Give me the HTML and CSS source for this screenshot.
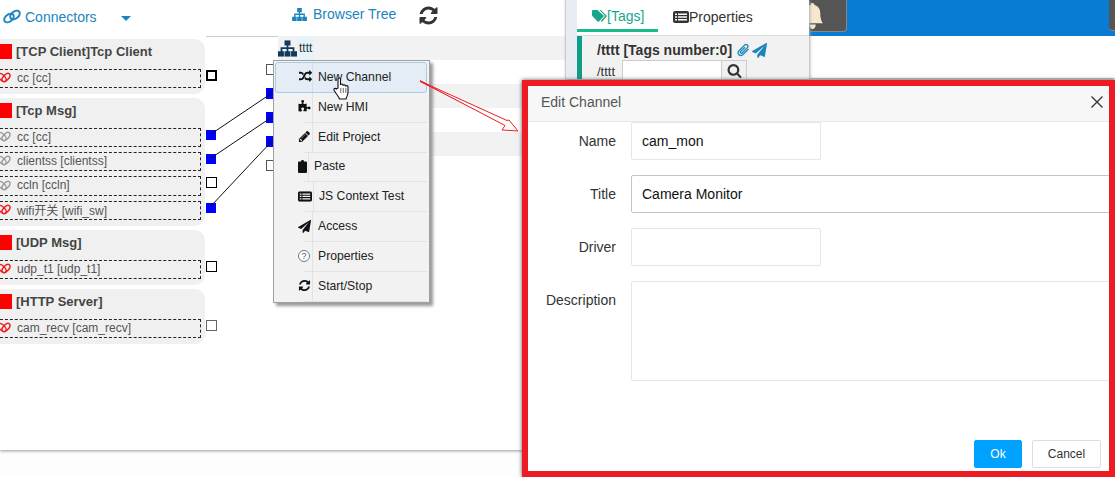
FILE: index.html
```html
<!DOCTYPE html>
<html lang="en">
<head>
<meta charset="utf-8">
<title>Edit Channel</title>
<link rel="stylesheet" href="styles.css">
</head>
<body>
<svg class="defs" width="0" height="0" aria-hidden="true">
  <symbol id="broken" viewBox="0 0 14 14">
    <g fill="none" stroke="currentColor" stroke-width="1.400">
      <ellipse cx="5" cy="6.500" rx="5" ry="2.700" transform="rotate(42 5 6.500)"/>
      <ellipse cx="9" cy="6.500" rx="5" ry="2.700" transform="rotate(-48 9 6.500)"/>
    </g>
  </symbol>
  <symbol id="sitemap" viewBox="0 0 16 14">
    <path d="M5.500 0h5v4.500H8.700V6h5.100v3.300H16V14h-5V9.300h1.300V7.500H8.700v1.800H10.500V14h-5V9.300h1.800V7.500H3.700v1.800H5V14H0V9.300h2.200V6h5.100V4.500H5.500z"/>
  </symbol>
  <symbol id="refresh" viewBox="0 0 1792 1792">
    <path d="M1639 1056q0 5-1 7-64 268-268 434.500t-478 166.500q-146 0-282.500-55t-243.500-157l-129 129q-19 19-45 19t-45-19-19-45v-448q0-26 19-45t45-19h448q26 0 45 19t19 45-19 45l-137 137q71 66 161 102t187 36q134 0 250-65t186-179q11-17 53-117 8-23 30-23h192q13 0 22.500 9.500t9.500 22.500zm25-800v448q0 26-19 45t-45 19h-448q-26 0-45-19t-19-45 19-45l138-138q-148-137-349-137-134 0-250 65t-186 179q-11 17-53 117-8 23-30 23h-199q-13 0-22.500-9.500t-9.500-22.500v-7q65-268 270-434.500t480-166.500q146 0 284 55.500t245 156.500l130-129q19-19 45-19t45 19 19 45z"/>
  </symbol>
  <symbol id="plane" viewBox="0 0 1792 1792">
    <path d="M1764 11q33 24 27 64l-256 1536q-5 29-32 45-14 8-31 8-11 0-24-5l-453-185-242 295q-18 23-49 23-13 0-22-4-19-7-30.500-23.500t-11.500-36.500v-349l864-1059-1069 925-395-162q-37-14-40-55-2-40 32-59l1664-960q15-9 32-9 20 0 36 11z"/>
  </symbol>
  <symbol id="listalt" viewBox="0 0 16 12">
    <path fill-rule="evenodd" d="M2 0h12a2 2 0 0 1 2 2v8a2 2 0 0 1-2 2H2a2 2 0 0 1-2-2V2a2 2 0 0 1 2-2zM2 2.500v1.500h2V2.500zM5 2.500v1.500h9V2.500zM2 5.200v1.500h2V5.200zM5 5.200v1.500h9V5.200zM2 8v1.500h2V8zM5 8v1.500h9V8z"/>
  </symbol>
</svg>

<div class="workspace">
  <section class="connectors">
    <header class="conn-head">
      <svg class="conn-link" viewBox="0 0 18 14"><g fill="none" stroke="currentColor" stroke-width="2"><ellipse cx="6" cy="8.500" rx="5.300" ry="3.500" transform="rotate(-38 6 8.500)"/><ellipse cx="12" cy="5.500" rx="5.300" ry="3.500" transform="rotate(-38 12 5.500)"/></g></svg>
      <span class="conn-title">Connectors</span>
      <span class="caret"></span>
    </header>

    <div class="groups">
      <article class="group">
        <h3 class="group-title"><span class="state"></span>[TCP Client]Tcp Client</h3>
        <div class="item"><svg class="chain red"><use href="#broken"/></svg>cc [cc]<span class="port"></span></div>
      </article>
      <article class="group">
        <h3 class="group-title"><span class="state"></span>[Tcp Msg]</h3>
        <div class="item"><svg class="chain grey"><use href="#broken"/></svg>cc [cc]<span class="port on"></span></div>
        <div class="item"><svg class="chain grey"><use href="#broken"/></svg>clientss [clientss]<span class="port on"></span></div>
        <div class="item tall"><svg class="chain grey"><use href="#broken"/></svg>ccln [ccln]<span class="port thin"></span></div>
        <div class="item"><svg class="chain red"><use href="#broken"/></svg>wifi开关 [wifi_sw]<span class="port on"></span></div>
      </article>
      <article class="group">
        <h3 class="group-title"><span class="state"></span>[UDP Msg]</h3>
        <div class="item"><svg class="chain red"><use href="#broken"/></svg>udp_t1 [udp_t1]<span class="port thin"></span></div>
      </article>
      <article class="group">
        <h3 class="group-title"><span class="state"></span>[HTTP Server]</h3>
        <div class="item"><svg class="chain red"><use href="#broken"/></svg>cam_recv [cam_recv]<span class="port thin soft"></span></div>
      </article>
    </div>
  </section>

  <section class="tree">
    <header class="tree-head">
      <svg class="tree-head-icon"><use href="#sitemap"/></svg>
      <span class="tree-title">Browser Tree</span>
      <svg class="tree-refresh"><use href="#refresh"/></svg>
    </header>
    <div class="tree-rows">
      <div class="tree-row band"><svg class="root-icon" viewBox="0 0 16 14"><use href="#sitemap"/></svg><span class="root-name">tttt</span></div>
      <div class="tree-row"><span class="port-in"></span></div>
      <div class="tree-row band"><span class="port-in on"></span></div>
      <div class="tree-row"><span class="port-in on"></span></div>
      <div class="tree-row band"><span class="port-in on"></span></div>
      <div class="tree-row"><span class="port-in"></span></div>
    </div>
  </section>

  <section class="tags">
    <div class="tags-strip"></div>
    <div class="tags-main">
      <nav class="tabs">
        <span class="tab active"><svg class="tab-icon" viewBox="0 0 15 12"><path d="M0 1a1 1 0 0 1 1-1h4.500L12 6l-5 5.500a1 1 0 0 1-1.400 0L.5 6.200A1.500 1.500 0 0 1 0 5z"/><path d="M7.500 0h1.300L15 6l-5 5.800-1.200-.8L13 6z"/></svg>[Tags]</span>
        <span class="tab"><svg class="tab-icon dark"><use href="#listalt"/></svg>Properties</span>
      </nav>
      <div class="tags-body">
        <div class="tags-heading">/tttt [Tags number:0]
          <svg class="clip" viewBox="0 0 14 14"><path d="M12.500 6 7 11.500c-3 2.500-6.500-.5-4-3.800l5.600-5.600c2-1.800 4.400.5 2.800 2.500L6 10c-1 .9-2.300-.2-1.400-1.400L9 4.200" fill="none" stroke="currentColor" stroke-width="1.300"/></svg>
          <svg class="plane"><use href="#plane"/></svg>
        </div>
        <div class="tags-search">
          <span class="tags-path">/tttt</span>
          <input class="tags-input" type="text" aria-label="Search">
          <span class="tags-btn"><svg class="search-icon" viewBox="0 0 1792 1792"><path d="M1216 832q0-185-131.500-316.500t-316.500-131.500-316.500 131.500-131.500 316.500 131.500 316.500 316.500 131.500 316.500-131.500 131.500-316.500zm512 832q0 52-38 90t-90 38q-54 0-90-38l-343-342q-179 124-399 124-143 0-273.500-55.500t-225-150-150-225-55.500-273.500 55.500-273.500 150-225 225-150 273.500-55.500 273.500 55.500 225 150 150 225 55.500 273.500q0 220-124 399l343 343q37 37 37 90z"/></svg></span>
        </div>
      </div>
    </div>
  </section>

  <section class="topright">
    <div class="bluebar">
      <span class="tile"><svg class="bell" viewBox="0 0 16 20"><path d="M8 0c1 0 1.500.7 1.500 1.600C12.500 2.300 14 5 14 8c0 4 1 6 2 7.500H0C1 14 2 12 2 8c0-3 1.500-5.700 4.500-6.400C6.500.7 7 0 8 0zM5.500 16.500h5C10.500 18.500 9.500 20 8 20s-2.500-1.500-2.500-3.500z"/></svg></span>
      <span class="tile edge"></span>
    </div>
  </section>
</div>

<svg class="wires" viewBox="0 0 1115 477" aria-hidden="true">
  <path d="M211 134 272 93M211 158 272 117M211 206 272 141"/>
</svg>

<div class="menu">
  <div class="menu-item hot"><span class="mi"><svg viewBox="0 0 1792 1792"><path d="M666 481q-60 92-137 273-22-45-37-72.500t-40.500-63.500-51-56.500-63-35-81.500-14.500h-224q-14 0-23-9t-9-23v-192q0-14 9-23t23-9h224q250 0 410 225zm1126 799q0 14-9 23l-320 320q-9 9-23 9-13 0-22.500-9.500t-9.500-22.500v-192q-32 0-85 .5t-81 1-73-1-71-5-64-10.500-63-18.500-58-28.500-59-40-55-53.500-56-69.500q59-93 136-273 22 45 37 72.500t40.500 63.500 51 56.500 63 35 81.500 14.500h256v-192q0-14 9-23t23-9q12 0 24 10l319 319q9 9 9 23zm0-896q0 14-9 23l-320 320q-9 9-23 9-13 0-22.500-9.500t-9.500-22.500v-192h-256q-48 0-87 15t-69 45-51 61.500-45 77.500q-32 62-78 171-29 66-49.500 111t-54 105-64 100-74 83-90 68.500-106.500 42-128 16.500h-224q-14 0-23-9t-9-23v-192q0-14 9-23t23-9h224q48 0 87-15t69-45 51-61.500 45-77.500q32-62 78-171 29-66 49.500-111t54-105 64-100 74-83 90-68.500 106.500-42 128-16.500h256v-192q0-14 9-23t23-9q12 0 24 10l319 319q9 9 9 23z"/></svg></span><span class="ml">New Channel</span></div>
  <div class="menu-item"><span class="mi"><svg viewBox="0 0 1792 1792"><path d="M1728 1098q0 81-44.500 135t-123.500 54q-41 0-77.500-17.500t-59-38-56.500-38-71-17.500q-110 0-110 124 0 39 16 115t15 115v5q-22 0-33 1-34 3-97.500 11.500t-115.500 13.500-98 5q-61 0-103-26.500t-42-83.500q0-37 17.500-71t38-56.500 38-59 17.500-77.500q0-79-54-123.500t-135-44.500q-84 0-143 45.500t-59 127.500q0 43 15 83t33.500 64.500 33.500 53 15 50.500q0 45-46 89-37 35-117 35-95 0-245-24-9-2-27.500-4t-27.500-4l-13-2q-1 0-3-1-2 0-2-1v-1024q2 1 17.500 3.500t34 5 21.500 3.500q150 24 245 24 80 0 117-35 46-44 46-89 0-22-15-50.500t-33.500-53-33.500-64.500-15-83q0-82 59-127.500t144-45.500q80 0 134 44.500t54 123.500q0 41-17.500 77.500t-38 59-38 56.500-17.500 71q0 57 42 83.500t103 26.500q64 0 180-15t163-17v2q-1 2-3.500 17.500t-5 34-3.500 21.500q-24 150-24 245 0 80 35 117 44 46 89 46 22 0 50.500-15t53-33.500 64.500-33.500 83-15q82 0 127.500 59t45.500 143z"/></svg></span><span class="ml">New HMI</span></div>
  <div class="menu-item"><span class="mi"><svg viewBox="0 0 1792 1792"><path d="M491 1536l91-91-235-235-91 91v107h128v128h107zm523-928q0-22-22-22-10 0-17 7l-542 542q-7 7-7 17 0 22 22 22 10 0 17-7l542-542q7-7 7-17zm-54-192l416 416-832 832h-416v-416zm683 96q0 53-37 90l-166 166-416-416 166-165q36-38 90-38 53 0 91 38l235 234q37 39 37 91z"/></svg></span><span class="ml">Edit Project</span></div>
  <div class="menu-item"><span class="mi narrow"><svg viewBox="0 0 9 13"><path d="M0 2.500a1 1 0 0 1 1-1h2C3 .5 3.600 0 4.500 0S6 .5 6 1.500h2a1 1 0 0 1 1 1V12a1 1 0 0 1-1 1H1a1 1 0 0 1-1-1z"/></svg></span><span class="ml">Paste</span></div>
  <div class="menu-item"><span class="mi wide"><svg viewBox="0 0 16 12"><use href="#listalt"/></svg></span><span class="ml">JS Context Test</span></div>
  <div class="menu-item"><span class="mi"><svg viewBox="0 0 1792 1792"><use href="#plane"/></svg></span><span class="ml">Access</span></div>
  <div class="menu-item"><span class="mi"><span class="help">?</span></span><span class="ml">Properties</span></div>
  <div class="menu-item"><span class="mi"><svg viewBox="0 0 1792 1792"><use href="#refresh"/></svg></span><span class="ml">Start/Stop</span></div>
</div>

<svg class="cursor" viewBox="0 0 18 23" aria-hidden="true">
  <path d="M5 11V2.200C5 .6 7.500.6 7.500 2.200V8c0-1.300 2.500-1.300 2.500 0v.8c0-1.300 2.500-1.300 2.500 0v.8c0-1.300 2.500-1.300 2.500 0V15c0 3-1.200 4.500-2 7H6.500C5.500 19 3 17 1.200 13.500c-.8-1.800 1-2.800 2.300-1.500z" fill="#fff" stroke="#111" stroke-width="1.100"/>
  <path d="M7.800 11v5M10.300 11v5M12.800 11v5" stroke="#444" stroke-width=".8" fill="none"/>
</svg>

<svg class="arrow" viewBox="0 0 1115 477" aria-hidden="true">
  <path class="arrow-line" d="M420 81 503 123"/>
  <path class="arrow-head" d="M420 81 507 120.500 509 120 518 131 502 130 505 125.500z"/>
</svg>

<div class="modal">
  <header class="modal-head">
    <span class="modal-title">Edit Channel</span>
    <svg class="modal-close" viewBox="0 0 12 12"><path d="M.5.500l11 11M11.500.500l-11 11"/></svg>
  </header>
  <form class="modal-form">
    <label class="f-label" for="f-name">Name</label>
    <input class="f-input short" id="f-name" type="text" value="cam_mon">
    <label class="f-label" for="f-title">Title</label>
    <input class="f-input wide dark" id="f-title" type="text" value="Camera Monitor">
    <label class="f-label" for="f-driver">Driver</label>
    <input class="f-input short" id="f-driver" type="text">
    <label class="f-label" for="f-desc">Description</label>
    <textarea class="f-input wide area" id="f-desc"></textarea>
  </form>
  <footer class="modal-foot">
    <button class="btn ok" type="button">Ok</button>
    <button class="btn" type="button">Cancel</button>
  </footer>
</div>
</body>
</html>
```

FILE: styles.css
```css
* { box-sizing: border-box; }
html, body { margin: 0; padding: 0; height: 477px; overflow: hidden; background: #fdfdfd; }
body { position: relative; font-family: "Liberation Sans", "Noto Sans CJK SC", Arial, sans-serif; font-size: 12px; color: #333; }
.defs { position: absolute; }

.workspace { display: flex; height: 450px; background: #fff; box-shadow: 0 1px 3px #999; }

/* connectors */
.connectors { width: 206px; flex: none; }
.conn-head { height: 36px; display: flex; align-items: center; color: #1b85bd; padding: 0 0 3px 3px; }
.conn-link { width: 18px; height: 15px; margin-right: 4px; }
.conn-title { font-size: 14px; }
.caret { margin-left: 24px; margin-top: 4px; border: 5px solid transparent; border-top: 5px solid #1b85bd; border-bottom: 0; }
.groups { display: flex; flex-direction: column; gap: 4px; margin: 3px 0 0 -10px; width: 215px; }
.group { background: #f0f0f0; border-radius: 10px; padding: 0 4px 6px 5px; }
.group-title { height: 30px; margin: 0; display: flex; align-items: center; gap: 4px; font-size: 13px; font-weight: bold; color: #444; padding-bottom: 5px; white-space: nowrap; }
.state { width: 15px; height: 15px; background: #f00; margin-left: 2px; flex: none; }
.item { position: relative; height: 19px; border: 1px dashed #222; border-left: 0; display: flex; align-items: center; padding: 0 0 2px 3px; color: #555; font-size: 12px; margin-bottom: 5px; white-space: nowrap; }
.item:last-child { margin-bottom: 0; }
.item.tall { height: 20px; }
.chain { width: 14px; height: 14px; margin-right: 6px; margin-left: -1px; margin-top: 1px; flex: none; }
.chain.red { color: #f01818; }
.chain.grey { color: #9a9a9a; }
.port { position: absolute; right: -17px; top: 0; width: 11px; height: 11px; border: 2px solid #000; background: #fff; }
.port.on { background: #00f; border: 0; width: 10px; height: 10px; top: 1px; right: -16px; }
.port.thin { border-width: 1.500px; }
.port.soft { border-color: #666; }

/* tree */
.tree { width: 359px; flex: none; }
.tree-head { height: 37px; border-bottom: 1px solid #ccc; display: flex; align-items: flex-start; color: #1b85bd; padding-left: 86px; }
.tree-head-icon { width: 15px; height: 13px; margin: 8px 6px 0 0; fill: #1b85bd; }
.tree-title { font-size: 14px; line-height: 16px; margin-top: 6px; }
.tree-refresh { width: 21px; height: 21px; margin: 5px 0 0 22px; fill: #333; }
.tree-rows { margin: -1px 0 0 72px; }
.tree-row { position: relative; height: 24px; display: flex; align-items: center; }
.tree-row.band { background: #f2f2f2; }
.root-icon { width: 19px; height: 17px; fill: #123a5e; flex: none; }
.root-name { height: 24px; line-height: 24px; padding: 0 2px; background: #e6f3f8; color: #333; font-size: 12px; }
.port-in { position: absolute; left: -12px; top: 4px; width: 10px; height: 11px; border: 1px solid #555; background: #fff; }
.port-in.on { background: #00f; border: 0; }

/* tags */
.tags { width: 244px; height: 79px; flex: none; display: flex; background: #fff; box-shadow: 1px 1px 3px #aaa; position: relative; }
.tags-strip { width: 12px; background: #e8ecf2; border-left: 1px solid #ccc; }
.tags-main { flex: 1; min-width: 0; }
.tabs { height: 36px; display: flex; border-bottom: 1px solid #e0e0e0; }
.tab { height: 32px; display: flex; align-items: center; font-size: 14px; color: #333; padding: 2px 0 0 15px; }
.tab.active { width: 81px; color: #1aa68b; border-bottom: 3px solid #1abb8c; }
.tab-icon { width: 15px; height: 12px; fill: #1aa68b; flex: none; }
.tab-icon.dark { fill: #333; width: 16px; }
.tags-body { height: 43px; background: #f2f2f2; border-left: 5px solid #0f9d8a; padding: 5px 0 0 15px; }
.tags-heading { display: flex; align-items: center; font-size: 14px; font-weight: bold; color: #333; height: 18px; white-space: nowrap; }
.clip { width: 14px; height: 14px; margin-left: 4px; color: #1b85bd; }
.plane { width: 15px; height: 15px; margin-left: 2px; fill: #1b85bd; }
.tags-search { display: flex; align-items: flex-start; margin-top: 1px; }
.tags-path { width: 25px; font-size: 13px; line-height: 15px; padding-top: 4px; color: #333; }
.tags-input { width: 100px; height: 20px; border: 1px solid #ccc; background: #fff; padding: 0; }
.tags-btn { width: 25px; height: 20px; border: 1px solid #ccc; border-left: 0; background: #f0f0f0; display: flex; align-items: center; justify-content: center; }
.search-icon { width: 15px; height: 15px; fill: #333; }

/* right */
.topright { flex: 1; height: 78px; background: #fff; box-shadow: 0 1px 3px #999; }
.bluebar { height: 36px; background: #0a7bd3; display: flex; justify-content: space-between; align-items: flex-start; }
.tile { width: 38px; height: 32px; background: #555; border-radius: 0 0 4px 4px; border-bottom: 1px solid #888; border-right: 1px solid #888; display: block; }
.tile.edge { width: 6px; height: 31px; border-right: 0; border-radius: 0 0 0 4px; }
.bell { display: block; width: 21px; height: 26px; margin: 3px 0 0 -7px; fill: #f5e8cf; }

/* diagram wires */
.wires { position: absolute; left: 0; top: 0; width: 1115px; height: 477px; pointer-events: none; }
.wires path { stroke: #111; stroke-width: 1; fill: none; }

/* context menu */
.menu { position: absolute; left: 273px; top: 60px; width: 157px; height: 243px; background: #f2f2f2; border: 1px solid #a0a0a0; box-shadow: 3px 3px 3px #999; padding-top: 1px; font-size: 12.200px; color: #222; }
.menu-item { height: 29.800px; margin: 0 2px 0 29px; border-bottom: 1px solid #e2e2e2; display: flex; align-items: stretch; }
.menu-item.hot { height: 31px; margin: 0 2px 0 1px; padding-left: 28px; background: #e4ecf5; border: 1px solid #a8cce0; border-radius: 3px; }
.mi { width: 14px; margin-left: -5px; display: flex; align-items: center; flex: none; padding-bottom: 1px; }
.menu-item.hot .mi { padding-bottom: 2px; }
.mi svg { width: 13px; height: 13px; fill: #111; display: block; }
.mi.narrow { width: 10px; }
.mi.narrow svg { width: 9px; }
.mi.wide { width: 15px; }
.mi.wide svg { width: 14px; }
.help { width: 12px; height: 12px; border: 1px solid #777; border-radius: 50%; font-size: 9px; line-height: 10px; text-align: center; color: #555; background: #fff; }
.ml { border-left: 1px solid #e2e2e2; padding: 0 0 1px 5px; display: flex; align-items: center; flex: 1; white-space: nowrap; }
.menu-item.hot .ml { padding-bottom: 2px; margin-left: -1px; border-left-color: #d5dfe9; }

.cursor { position: absolute; left: 333px; top: 77px; width: 18px; height: 23px; }

.arrow { position: absolute; left: 0; top: 0; width: 1115px; height: 477px; pointer-events: none; }
.arrow-line { stroke: #ed1c24; stroke-width: 1.500; fill: none; }
.arrow-head { stroke: #ed1c24; stroke-width: 1; fill: #fff; }

/* modal */
.modal { position: absolute; left: 522px; top: 80px; width: 593px; height: 397px; background: #fff; border: 6px solid #ed1c24; box-shadow: 0 0 4px #555; display: flex; flex-direction: column; overflow: hidden; }
.modal-head { height: 36px; flex: none; background: #f7f7f7; border-bottom: 1px solid #e8e8e8; display: flex; align-items: center; justify-content: space-between; padding: 0 6px 4px 13px; }
.modal-title { font-size: 14px; color: #555; }
.modal-close { width: 12px; height: 12px; }
.modal-close path { stroke: #333; stroke-width: 1.300; fill: none; }
.modal-form { display: grid; grid-template-columns: 88px 1fr; column-gap: 15px; row-gap: 15px; }
.f-label { font-size: 14px; color: #333; text-align: right; line-height: 38px; }
.f-input { display: block; height: 38px; border: 1px solid #e6e6e6; border-radius: 2px; background: #fff; padding: 0 10px; font: 14px "Liberation Sans", Arial, sans-serif; color: #111; outline: 0; }
.f-input.short { width: 190px; }
.f-input.wide { width: 490px; }
.f-input.dark { border-color: #c4c4c4; }
.f-input.area { height: 100px; resize: none; }
.modal-foot { margin-top: auto; display: flex; justify-content: flex-end; gap: 10px; padding: 0 8px 3px 0; }
.btn { height: 28px; width: 69px; border: 1px solid #ddd; border-radius: 2px; background: #fff; font: 12px "Liberation Sans", Arial, sans-serif; color: #333; padding: 0; }
.btn.ok { width: 48px; background: #00a2ff; border-color: #00a2ff; color: #fff; }
```
